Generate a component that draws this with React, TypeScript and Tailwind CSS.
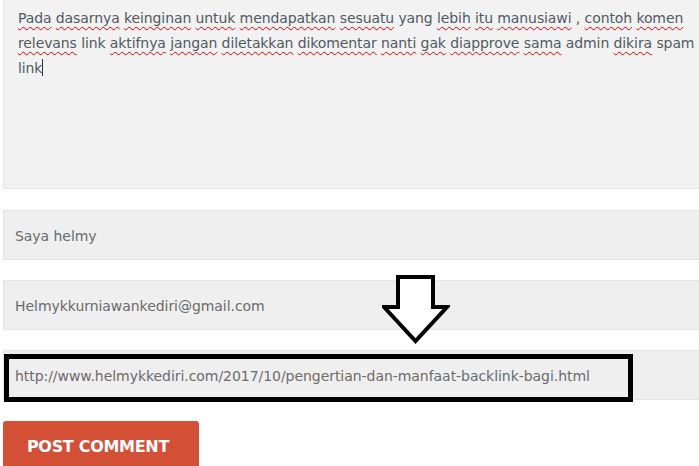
import { ReactNode } from 'react'

const font = { fontFamily: '"DejaVu Sans", Verdana, sans-serif' }

function W({ children }: { children: ReactNode }) {
  return <span className="underline decoration-wavy decoration-[#e00000] decoration-1 underline-offset-[3px]">{children}</span>
}

export default function App() {
  return (
    <div className="relative w-[699px] h-[466px] overflow-hidden bg-white" style={font}>
      <div className="w-[720px] pl-[3px]">
        {/* comment body */}
        <div className="h-[190px] -mt-px bg-[#f2f2f2] border border-[#e6e6e6] pl-[14px] pr-3 pt-[6px] text-[14px] leading-[25px] text-[#505a63] tracking-[-0.1px]">
          <W>Pada</W> <W>dasarnya</W> <W>keinginan</W> <W>untuk</W> <W>mendapatkan</W> <W>sesuatu</W> yang <W>lebih</W> <W>itu</W> <W>manusiawi</W> , <W>contoh</W> <W>komen</W>
          <br />
          <W>relevans</W> link <W>aktifnya</W> <W>jangan</W> <W>diletakkan</W> <W>dikomentar</W> <W>nanti</W> <W>gak</W> <W>diapprove</W> <W>sama</W> admin <W>dikira</W> spam
          <br />
          link<span className="inline-block w-px h-[17px] bg-[#333] align-[-3px]" />
        </div>

        <div className="flex flex-col gap-[20px] mt-[21px]">
          {['Saya helmy', 'Helmykkurniawankediri@gmail.com', 'http://www.helmykkediri.com/2017/10/pengertian-dan-manfaat-backlink-bagi.html'].map(v => (
            <div key={v} className="h-[50px] bg-[#efefef] border border-[#e4e4e4] flex items-center pl-[11px] pt-[3px] text-[14px] text-[#6b6b6b] tracking-[-0.05px]">
              {v}
            </div>
          ))}
        </div>

        <button className="mt-[21px] w-[196px] h-[50px] rounded-t-[3px] bg-[#d34f36] text-white font-bold text-[16px] pt-[2px] pr-[6px] tracking-[-0.3px]" style={{ fontFamily: 'Verdana, "DejaVu Sans", sans-serif' }}>
          POST COMMENT
        </button>
      </div>

      {/* highlight box */}
      <div className="absolute left-[4px] top-[354px] w-[629px] h-[48px] border-[5px] border-black" />

      {/* arrow */}
      <svg className="absolute left-[382px] top-[275px]" width="68" height="70" viewBox="0 0 68 70">
        <path d="M16 2 H51 V32 H65 L33.5 66 L2 32 H16 Z" fill="white" stroke="black" strokeWidth="4" strokeLinejoin="miter" />
      </svg>
    </div>
  )
}
